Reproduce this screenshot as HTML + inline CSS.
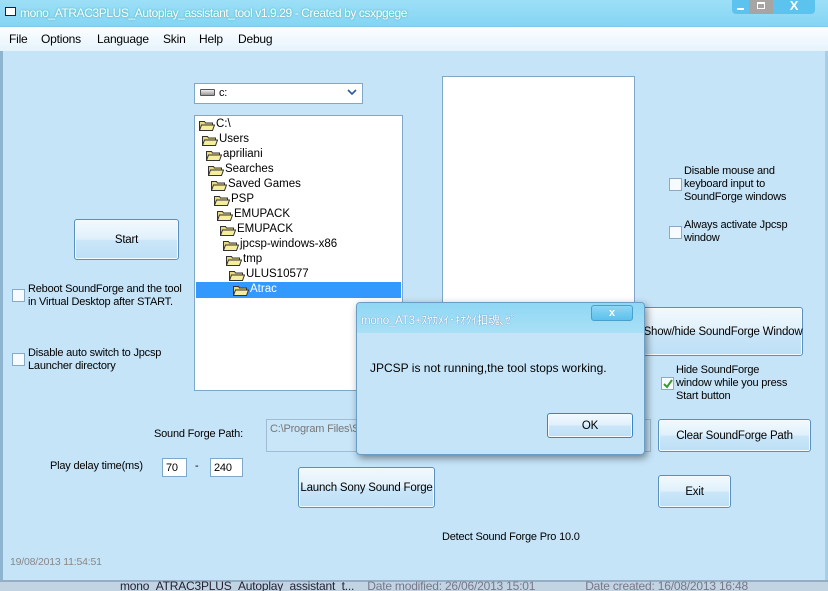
<!DOCTYPE html>
<html><head><meta charset="utf-8"><style>
*{margin:0;padding:0;box-sizing:border-box}
body{width:828px;height:591px;overflow:hidden;background:#c6e4f8;font-family:"Liberation Sans","Noto Sans CJK JP",sans-serif;font-size:11px;letter-spacing:-0.2px;color:#000;position:relative}
.a{position:absolute;white-space:nowrap}
.btn{position:absolute;white-space:nowrap;border:1px solid #5b8fbc;border-radius:3px;background:linear-gradient(#f2f9fe,#dff0fb 50%,#cbe6f8 51%,#bcdff6);display:flex;align-items:center;justify-content:center;font-size:11.5px;box-shadow:inset 0 0 0 1px #f4faff}
.cb{position:absolute;width:13px;height:13px;border:1px solid #8aa9c4;background:#f6fbff}
.lbl{position:absolute;line-height:13px;font-size:11px;white-space:nowrap}
</style></head><body>
<!-- title bar -->
<div class="a" style="left:0;top:0;width:828px;height:26px;background:linear-gradient(#9ddff7,#84d5f3)"></div>
<div class="a" style="left:5px;top:7px;width:11px;height:9px;border:1px solid #222;background:#fff"></div>
<div class="a" style="left:20px;top:6px;color:#fff;font-size:12px;letter-spacing:-0.4px;text-shadow:0 0 2px #3aa">mono_ATRAC3PLUS_Autoplay_assistant_tool v1.9.29 - Created by csxpgege</div>
<div class="a" style="left:732px;top:0;width:17px;height:14px;background:#5cc3ee;border-radius:0 0 0 4px"></div>
<div class="a" style="left:737px;top:8px;width:7px;height:2px;background:#fff"></div>
<div class="a" style="left:749px;top:0;width:24px;height:14px;background:#a7a4a4"></div>
<div class="a" style="left:757px;top:2px;width:8px;height:7px;border:1px solid #fff;border-top-width:2px"></div>
<div class="a" style="left:773px;top:0;width:42px;height:14px;background:#5cc3ee;border-radius:0 0 4px 0;color:#fff;font-weight:bold;text-align:center;line-height:12px;font-size:13px">X</div>
<!-- menu -->
<div class="a" style="left:0;top:26px;width:828px;height:25px;background:linear-gradient(#fdfeff,#e5f3fc);border-top:1px solid #7ccbea"></div>
<div class="a" style="left:9px;top:32px;font-size:12px">File</div>
<div class="a" style="left:41px;top:32px;font-size:12px">Options</div>
<div class="a" style="left:97px;top:32px;font-size:12px">Language</div>
<div class="a" style="left:163px;top:32px;font-size:12px">Skin</div>
<div class="a" style="left:199px;top:32px;font-size:12px">Help</div>
<div class="a" style="left:238px;top:32px;font-size:12px">Debug</div>
<div class="a" style="left:0;top:51px;width:3px;height:530px;background:#8fb4cf"></div>
<div class="a" style="left:825px;top:51px;width:3px;height:530px;background:#a9cde6"></div>
<!-- drive combo -->
<div class="a" style="left:194px;top:83px;width:169px;height:21px;background:#fff;border:1px solid #7fa7c8"></div>
<div class="a" style="left:200px;top:89px;width:15px;height:7px;border:1px solid #555;background:linear-gradient(#eee,#999);border-radius:1px"></div>
<div class="a" style="left:219px;top:87px">c:</div>
<svg class="a" style="left:347px;top:89px" width="10" height="7"><path d="M1 1L5 5L9 1" stroke="#2a5a9a" stroke-width="1.6" fill="none"/></svg>
<!-- tree -->
<div class="a" style="left:194px;top:115px;width:209px;height:276px;background:#fff;border:1px solid #7fa7c8">
<div class="a" style="left:1px;top:166px;width:205px;height:16px;background:#3399ff"></div>
</div>
<div id="tr"></div>
<!-- list -->
<div class="a" style="left:442px;top:76px;width:193px;height:260px;background:#fff;border:1px solid #7fa7c8"></div>
<!-- left -->
<div class="btn" style="left:74px;top:219px;width:105px;height:41px">Start</div>
<div class="cb" style="left:12px;top:289px"></div>
<div class="lbl" style="left:28px;top:283px">Reboot SoundForge and the tool<br>in Virtual Desktop after START.</div>
<div class="cb" style="left:12px;top:353px"></div>
<div class="lbl" style="left:28px;top:347px">Disable auto switch to Jpcsp<br>Launcher directory</div>
<div class="a" style="left:154px;top:428px">Sound Forge Path:</div>
<div class="a" style="left:50px;top:460px">Play delay time(ms)</div>
<div class="a" style="left:162px;top:458px;width:25px;height:19px;background:#fff;border:1px solid #7fa7c8;padding:3px 3px">70</div>
<div class="a" style="left:195px;top:460px">-</div>
<div class="a" style="left:210px;top:458px;width:33px;height:19px;background:#fff;border:1px solid #7fa7c8;padding:3px 3px">240</div>
<div class="a" style="left:266px;top:419px;width:385px;height:33px;background:#c9e5f8;border:1px solid #9fbcd3;color:#777;padding:3px 3px">C:\Program Files\S</div>
<div class="btn" style="left:298px;top:467px;width:137px;height:41px">Launch Sony Sound Forge</div>
<div class="a" style="left:442px;top:531px">Detect Sound Forge Pro 10.0</div>
<div class="a" style="left:10px;top:556px;color:#888;font-size:10.5px">19/08/2013 11:54:51</div>
<!-- right -->
<div class="cb" style="left:669px;top:178px"></div>
<div class="lbl" style="left:684px;top:165px">Disable mouse and<br>keyboard input to<br>SoundForge windows</div>
<div class="cb" style="left:669px;top:226px"></div>
<div class="lbl" style="left:684px;top:219px">Always activate Jpcsp<br>window</div>
<div class="btn" style="left:643px;top:307px;width:160px;height:49px">Show/hide SoundForge Window</div>
<div class="cb" style="left:661px;top:377px"></div>
<svg class="a" style="left:662px;top:378px" width="12" height="12"><path d="M2 6L5 9L10 2" stroke="#3a9a2a" stroke-width="2" fill="none"/></svg>
<div class="lbl" style="left:676px;top:364px">Hide SoundForge<br>window while you press<br>Start button</div>
<div class="btn" style="left:658px;top:419px;width:153px;height:33px">Clear SoundForge Path</div>
<div class="btn" style="left:658px;top:475px;width:73px;height:33px">Exit</div>
<!-- bottom strip -->
<div class="a" style="left:0;top:581px;width:828px;height:10px;background:#c2d4e2"></div>
<div class="a" style="left:0;top:580px;width:828px;height:2px;background:#95aec3"></div>
<div class="a" style="left:120px;top:581px;font-size:12px;color:#223;line-height:10px;overflow:hidden;height:10px">mono_ATRAC3PLUS_Autoplay_assistant_t... <span style="color:#778;margin-left:10px">Date modified: 26/06/2013 15:01</span><span style="color:#778;margin-left:50px">Date created: 16/08/2013 16:48</span></div>
<!-- dialog -->
<div class="a" style="left:356px;top:302px;width:289px;height:153px;background:#c6e4f8;border:1px solid #6a9ec4;box-shadow:2px 3px 8px rgba(0,0,0,.45);border-radius:4px"></div>
<div class="a" style="left:357px;top:303px;width:287px;height:30px;background:linear-gradient(#8fd7f4,#a9e0f6);border-radius:3px 3px 0 0"></div>
<div class="a" style="left:361px;top:312px;color:#fff;font-size:11.5px;text-shadow:0 0 1px #36a">mono_AT3+ｽﾔｶﾒｲ･ｷｵｸｲ扣魂､ｾﾞ</div>
<div class="a" style="left:591px;top:305px;width:42px;height:16px;background:linear-gradient(#8ed6f5,#5cc1ec);border:1px solid #4aa0cc;border-radius:3px;color:#fff;font-weight:bold;text-align:center;line-height:14px">x</div>
<div class="a" style="left:370px;top:361px;font-size:12px;letter-spacing:0">JPCSP is not running,the tool stops working.</div>
<div class="btn" style="left:547px;top:413px;width:86px;height:25px;border-color:#3c84c8">OK</div>
<script>
var items=["C:\\","Users","apriliani","Searches","Saved Games","PSP","EMUPACK","EMUPACK","jpcsp-windows-x86","tmp","ULUS10577","Atrac"];
var xs=[199,202,206,208,211,214,217,220,223,226,229,233],h="";
for(var i=0;i<12;i++){var y=117+i*15;var sel=i==11;
h+='<svg class="a" style="left:'+xs[i]+'px;top:'+(y+2)+'px" width="16" height="12"><path d="M0.5 2.5h5l1 1.5h7v7.5h-13z" fill="#e8d880" stroke="#333"/><path d="M2.5 6h13l-2 5.5h-13z" fill="#f6ee9c" stroke="#333"/></svg>';
h+='<div class="a" style="left:'+(xs[i]+17)+'px;top:'+y+'px;line-height:15px;font-size:11.5px;letter-spacing:0;'+(sel?'color:#fff':'')+'">'+items[i]+'</div>';}
document.getElementById("tr").innerHTML=h;
</script>
</body></html>
